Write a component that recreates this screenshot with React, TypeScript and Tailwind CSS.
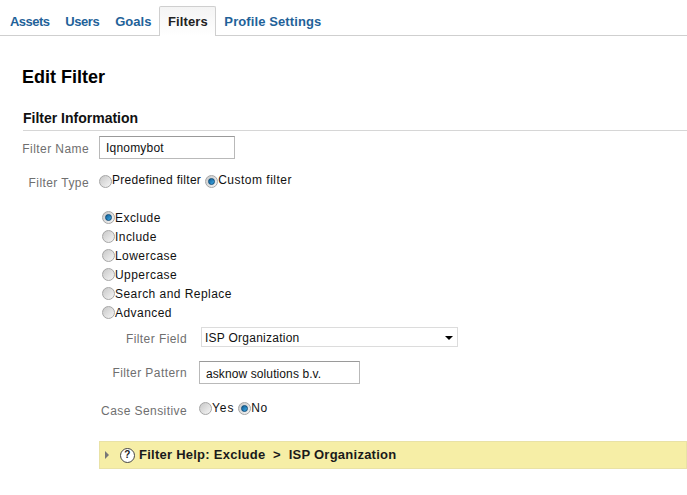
import React from 'react';

const tabs = [
  { name: 'Assets', cls: 'tracking-[-0.55px]' },
  { name: 'Users', cls: 'tracking-[-0.45px]' },
  { name: 'Goals', cls: 'tracking-[0px]' },
  { name: 'Filters', cls: 'tracking-[0.1px]' },
  { name: 'Profile Settings', cls: 'tracking-[0.1px]' },
];
const actions = ['Exclude', 'Include', 'Lowercase', 'Uppercase', 'Search and Replace', 'Advanced'];

const Radio = ({ checked = false }: { checked?: boolean }) => (
  <span className="flex h-[13px] w-[13px] shrink-0 items-center justify-center rounded-full border border-[#a6a6a6] bg-gradient-to-br from-[#c8c8c8] to-[#f6f6f6]">
    {checked && <span className="h-[7px] w-[7px] rounded-full border border-[#0b4a78] bg-gradient-to-br from-[#0f5f96] to-[#3fa9e6]" />}
  </span>
);

const Option = ({ label, checked, textCls }: { label: string; checked?: boolean; textCls: string }) => (
  <span className="flex items-center text-[12px] text-[#111]">
    <Radio checked={checked} />
    <span className={textCls}>{label}</span>
  </span>
);

const Label = ({ children, w }: { children: React.ReactNode; w: string }) => (
  <span className={`${w} shrink-0 whitespace-nowrap text-right text-[12px] tracking-[0.42px] text-[#6f6f6f]`}>{children}</span>
);

export default function App() {
  return (
    <div className="h-[495px] w-[687px] overflow-hidden bg-white font-['Liberation_Sans',Arial,sans-serif]">
      {/* Tabs */}
      <div className="flex h-[36px] items-end gap-[2px] border-b border-[#cfcfcf] pl-[3px]">
        {tabs.map(tab =>
          tab.name === 'Filters' ? (
            <div key={tab.name} className={`-mb-px -ml-px -mr-px flex h-[30px] w-[57px] items-center justify-center rounded-t-[2px] border border-b-0 border-[#cfcfcf] bg-gradient-to-b from-[#f4f4f4] to-white text-[13px] font-bold text-[#222] ${tab.cls}`}>
              {tab.name}
            </div>
          ) : (
            <div key={tab.name} className={`flex h-[29px] items-center px-[7px] pt-[2px] text-[13px] font-bold text-[#1f6299] ${tab.cls}`}>
              {tab.name}
            </div>
          )
        )}
      </div>

      <h1 className="ml-[22px] mt-[30px] text-[18px] font-bold leading-[22px] text-black">Edit Filter</h1>

      <h2 className="ml-[23px] mt-[22px] border-b border-[#d6d6d6] pb-[3px] text-[14px] font-bold leading-[17px] text-[#111]">Filter Information</h2>

      <div className="mt-[5px] flex items-center gap-[10px] pl-[22px]">
        <Label w="w-[67px] pt-[2px]">Filter Name</Label>
        <div className="flex h-[23px] w-[136px] items-center border border-[#b9b9b9] border-t-[#9a9a9a] pl-[6px] text-[12px] tracking-[0.2px] text-[#111]">Iqnomybot</div>
      </div>

      <div className="mt-[14px] flex items-start gap-[10px] pl-[22px]">
        <Label w="w-[67px] pt-[1px]">Filter Type</Label>
        <div className="flex items-center gap-[4px]">
          <Option label="Predefined filter" textCls="-mt-[2px] tracking-[0.3px]" />
          <Option label="Custom filter" checked textCls="-mt-[2px] tracking-[0.5px]" />
        </div>
      </div>

      <div className="ml-[102px] mt-[17px] flex flex-col gap-[4px]">
        {actions.map((a, i) => (
          <div key={a} className="h-[15px] leading-[15px]">
            <Option label={a} checked={i === 0} textCls="mt-[2px] tracking-[0.45px]" />
          </div>
        ))}
      </div>

      <div className="mt-[7px] flex items-center gap-[14px] pl-[22px]">
        <Label w="w-[165px] pt-[4px]">Filter Field</Label>
        <div className="flex h-[20px] w-[257px] items-center justify-between border border-[#dcdcdc] pl-[3px] pr-[4px] pt-[1px] text-[12px] tracking-[0.25px] text-[#111]">
          <span>ISP Organization</span>
          <span className="h-0 w-0 border-x-[4px] border-t-[4px] border-x-transparent border-t-black" />
        </div>
      </div>

      <div className="mt-[13px] flex items-center gap-[12px] pl-[22px]">
        <Label w="w-[165px] pt-[1px]">Filter Pattern</Label>
        <div className="flex h-[23px] w-[161px] items-center border border-[#b9b9b9] border-t-[#9a9a9a] pl-[6px] pt-[2px] text-[12px] tracking-[0.1px] text-[#111]">asknow solutions b.v.</div>
      </div>

      <div className="mt-[16px] flex items-center gap-[12px] pl-[22px]">
        <Label w="w-[165px] pt-[2px]">Case Sensitive</Label>
        <div className="-mt-[3px] flex items-center gap-[4px]">
          <Option label="Yes" textCls="-mt-[1px] tracking-[0.9px]" />
          <Option label="No" checked textCls="-mt-[1px] tracking-[0.6px]" />
        </div>
      </div>

      {/* Help bar */}
      <div className="ml-[99px] mt-[21px] flex h-[28px] items-center border border-[#e9e2a6] bg-[#f6eea6] pl-[5px] text-[13px] font-bold tracking-[0.25px] text-[#1a1a1a]">
        <span className="h-0 w-0 border-y-[4px] border-l-[4px] border-y-transparent border-l-[#777]" />
        <span className="ml-[11px] mr-[4px] flex h-[15px] w-[15px] items-center justify-center rounded-full border-[1.5px] border-[#444] bg-white text-[10px] leading-none">?</span>
        <span className="whitespace-pre">Filter Help: Exclude  &gt;  ISP Organization</span>
      </div>
    </div>
  );
}
